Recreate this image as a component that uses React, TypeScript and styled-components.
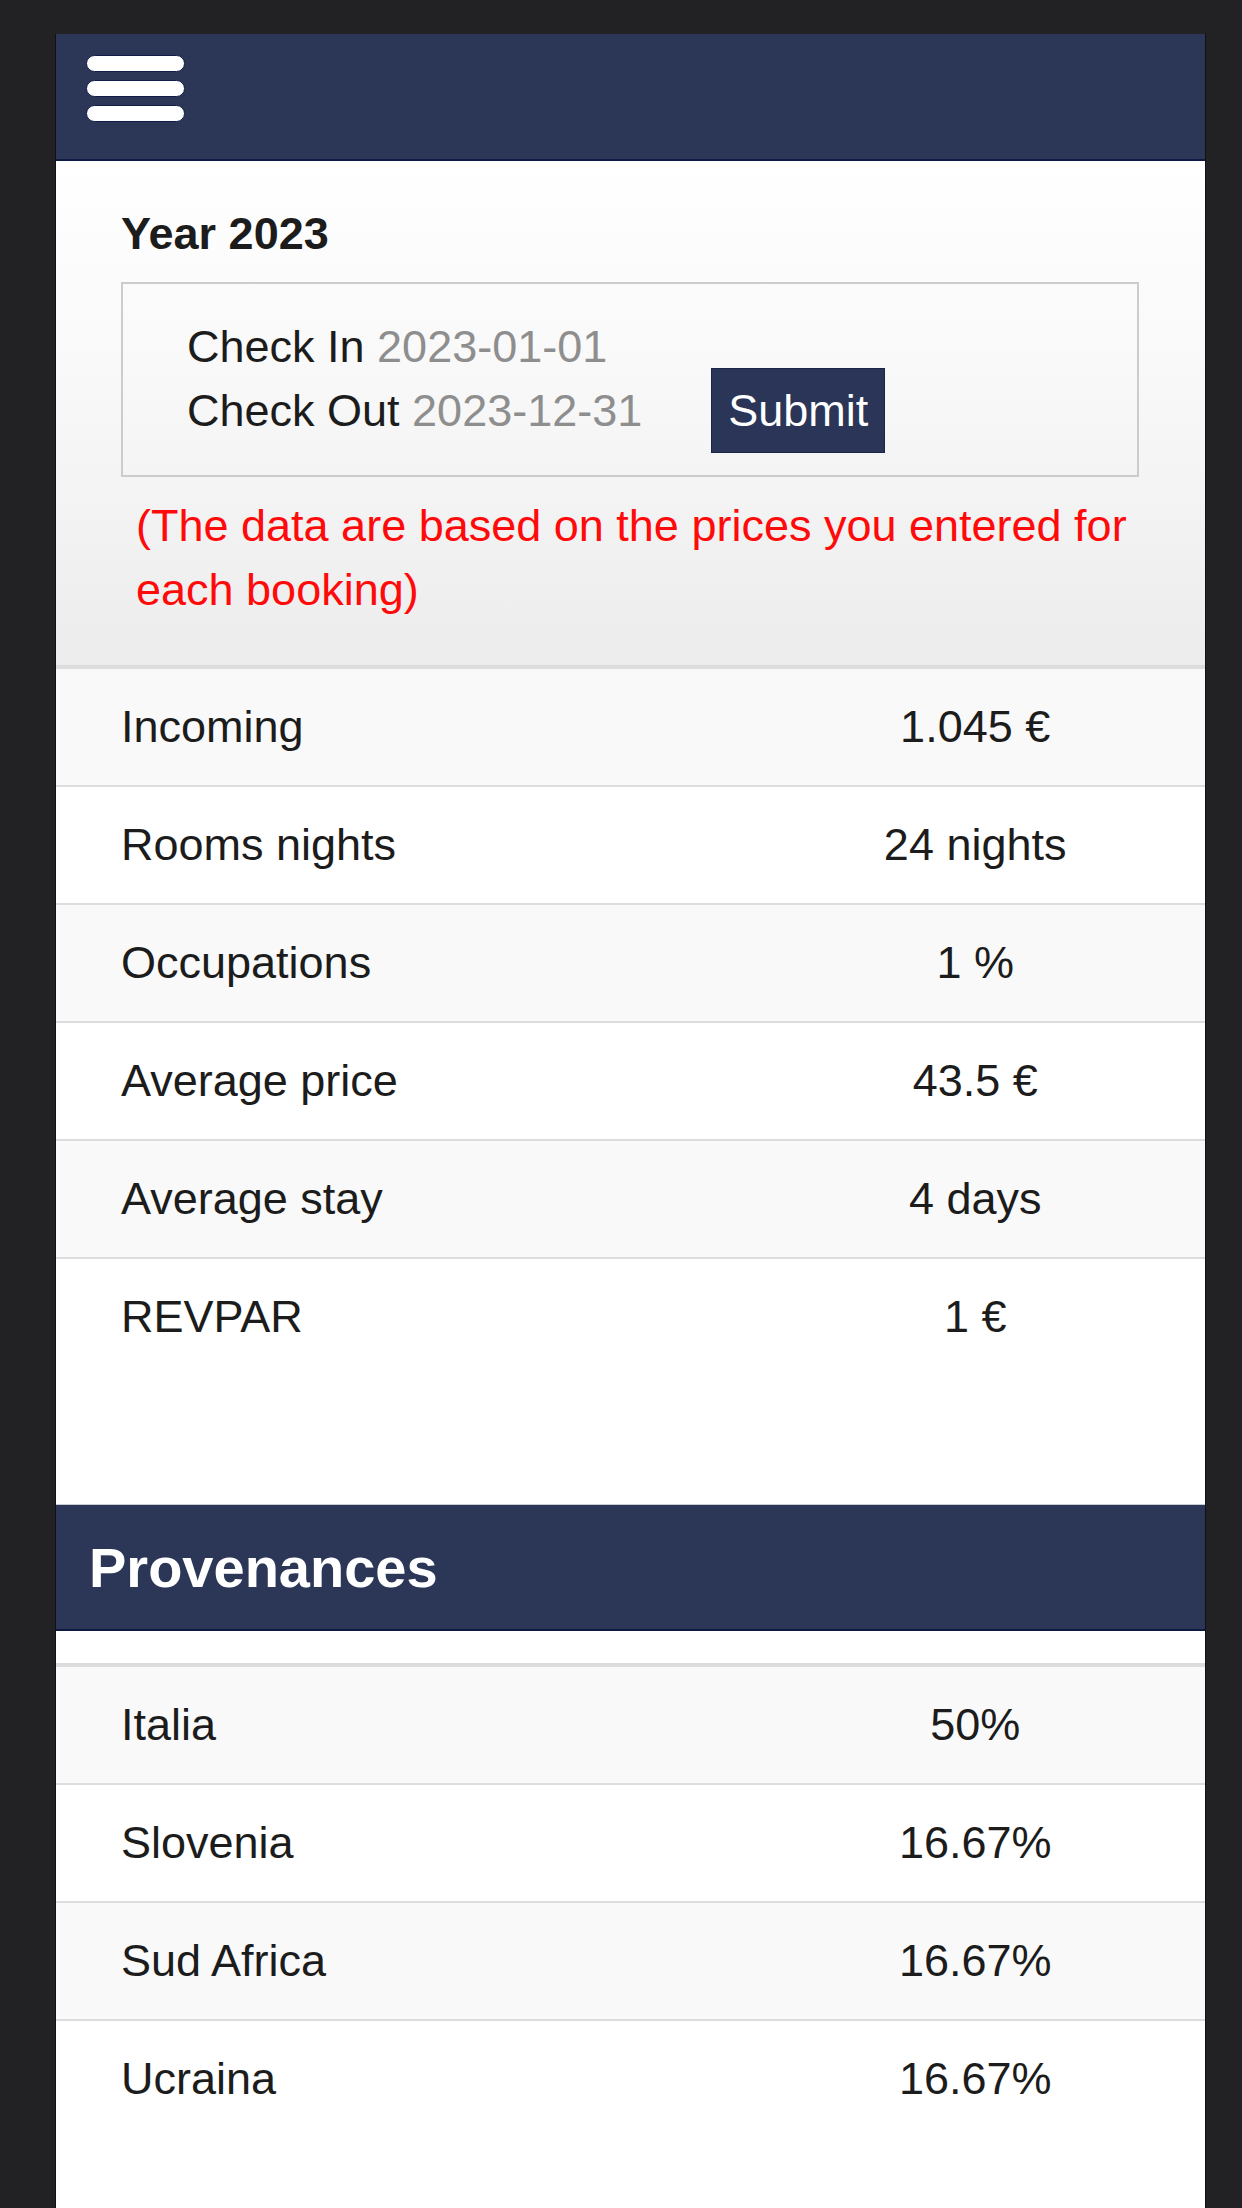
import styled, { createGlobalStyle } from 'styled-components';

const GlobalStyle = createGlobalStyle`
  html, body {
    margin: 0;
    padding: 0;
    background: #222224;
  }
  body {
    font-family: 'Liberation Sans', Arial, Helvetica, sans-serif;
    color: #1f1f1f;
  }
  * {
    box-sizing: border-box;
  }
`;

const Page = styled.div`
  padding: 34px 36px 0 55px;
  min-height: 2208px;
`;

const Panel = styled.div`
  background: #fff;
  min-height: 2174px;
  border-left: 1px solid #111;
  border-right: 1px solid #111;
`;

const NavBar = styled.header`
  height: 127px;
  background: #2c3757;
  border-bottom: 2px solid #0e1a44;
  padding: 21px 0 0 30px;
`;

const Burger = styled.button`
  display: flex;
  flex-direction: column;
  gap: 8px;
  padding: 0;
  background: none;
  border: none;
  cursor: pointer;
`;

const Bar = styled.span`
  display: block;
  width: 99px;
  height: 17px;
  background: #fff;
  border: 1.5px solid #101b46;
  border-radius: 9px;
`;

const Filter = styled.section`
  padding: 47px 66px 43px 65px;
  background: linear-gradient(180deg, #ffffff 0%, #f8f8f8 45%, #ececec 100%);
`;

const YearTitle = styled.h3`
  margin: 0 0 22px;
  font-size: 45px;
  line-height: 52px;
  font-weight: 700;
  color: #1c1c1c;
`;

const DateBox = styled.div`
  display: flex;
  align-items: flex-end;
  border: 2px solid #cccccc;
  padding: 31px 64px 22px;
`;

const Dates = styled.div`
  font-size: 45px;
  line-height: 64px;
  padding-bottom: 10px;
`;

const DateLine = styled.div`
  white-space: nowrap;
  color: #1c1c1c;

  span {
    color: #8e8e8e;
  }
`;

const SubmitButton = styled.button`
  margin-left: 69px;
  height: 85px;
  padding: 16px 16px 17px;
  font-family: inherit;
  font-size: 45px;
  line-height: 52px;
  color: #fff;
  background: #2a3558;
  border: 1px solid #1b2548;
  border-radius: 0;
  cursor: pointer;
`;

const Note = styled.p`
  margin: 17px 0 0;
  padding-left: 15px;
  font-size: 45px;
  line-height: 64px;
  color: #ff0a0a;
`;

const Table = styled.div`
  border-top: 2px solid #dcdcdc;
`;

const Row = styled.div<{ $striped: boolean }>`
  display: grid;
  grid-template-columns: 60% 40%;
  height: 118px;
  border-top: 2px solid #dddddd;
  background: ${(p) => (p.$striped ? '#f9f9f9' : '#ffffff')};
  font-size: 45px;
  line-height: 116px;
  color: #1c1c1c;
`;

const Label = styled.div`
  padding-left: 65px;
  white-space: nowrap;
`;

const Value = styled.div`
  text-align: center;
  white-space: nowrap;
`;

const SectionHeader = styled.h2<{ $gap: number }>`
  margin: ${(p) => p.$gap}px 0 0;
  height: 127px;
  padding: 2px 0 0 33px;
  background: #2c3757;
  border-top: 1px solid #c9ccd4;
  border-bottom: 2px solid #0e1a44;
  font-size: 56px;
  line-height: 122px;
  font-weight: 700;
  color: #fff;
`;

const ProvTable = styled(Table)`
  margin-top: 32px;
`;

const stats = [
  { label: 'Incoming', value: '1.045 €' },
  { label: 'Rooms nights', value: '24 nights' },
  { label: 'Occupations', value: '1 %' },
  { label: 'Average price', value: '43.5 €' },
  { label: 'Average stay', value: '4 days' },
  { label: 'REVPAR', value: '1 €' },
];

const provenances = [
  { label: 'Italia', value: '50%' },
  { label: 'Slovenia', value: '16.67%' },
  { label: 'Sud Africa', value: '16.67%' },
  { label: 'Ucraina', value: '16.67%' },
];

export default function App() {
  return (
    <>
      <GlobalStyle />
      <Page>
        <Panel>
          <NavBar>
            <Burger aria-label="menu">
              <Bar />
              <Bar />
              <Bar />
            </Burger>
          </NavBar>

          <Filter>
            <YearTitle>Year 2023</YearTitle>
            <DateBox>
              <Dates>
                <DateLine>
                  Check In <span>2023-01-01</span>
                </DateLine>
                <DateLine>
                  Check Out <span>2023-12-31</span>
                </DateLine>
              </Dates>
              <SubmitButton>Submit</SubmitButton>
            </DateBox>
            <Note>(The data are based on the prices you entered for each booking)</Note>
          </Filter>

          <Table>
            {stats.map((s, i) => (
              <Row key={s.label} $striped={i % 2 === 0}>
                <Label>{s.label}</Label>
                <Value>{s.value}</Value>
              </Row>
            ))}
          </Table>

          <SectionHeader $gap={129}>Provenances</SectionHeader>

          <ProvTable>
            {provenances.map((p, i) => (
              <Row key={p.label} $striped={i % 2 === 0}>
                <Label>{p.label}</Label>
                <Value>{p.value}</Value>
              </Row>
            ))}
          </ProvTable>
        </Panel>
      </Page>
    </>
  );
}
